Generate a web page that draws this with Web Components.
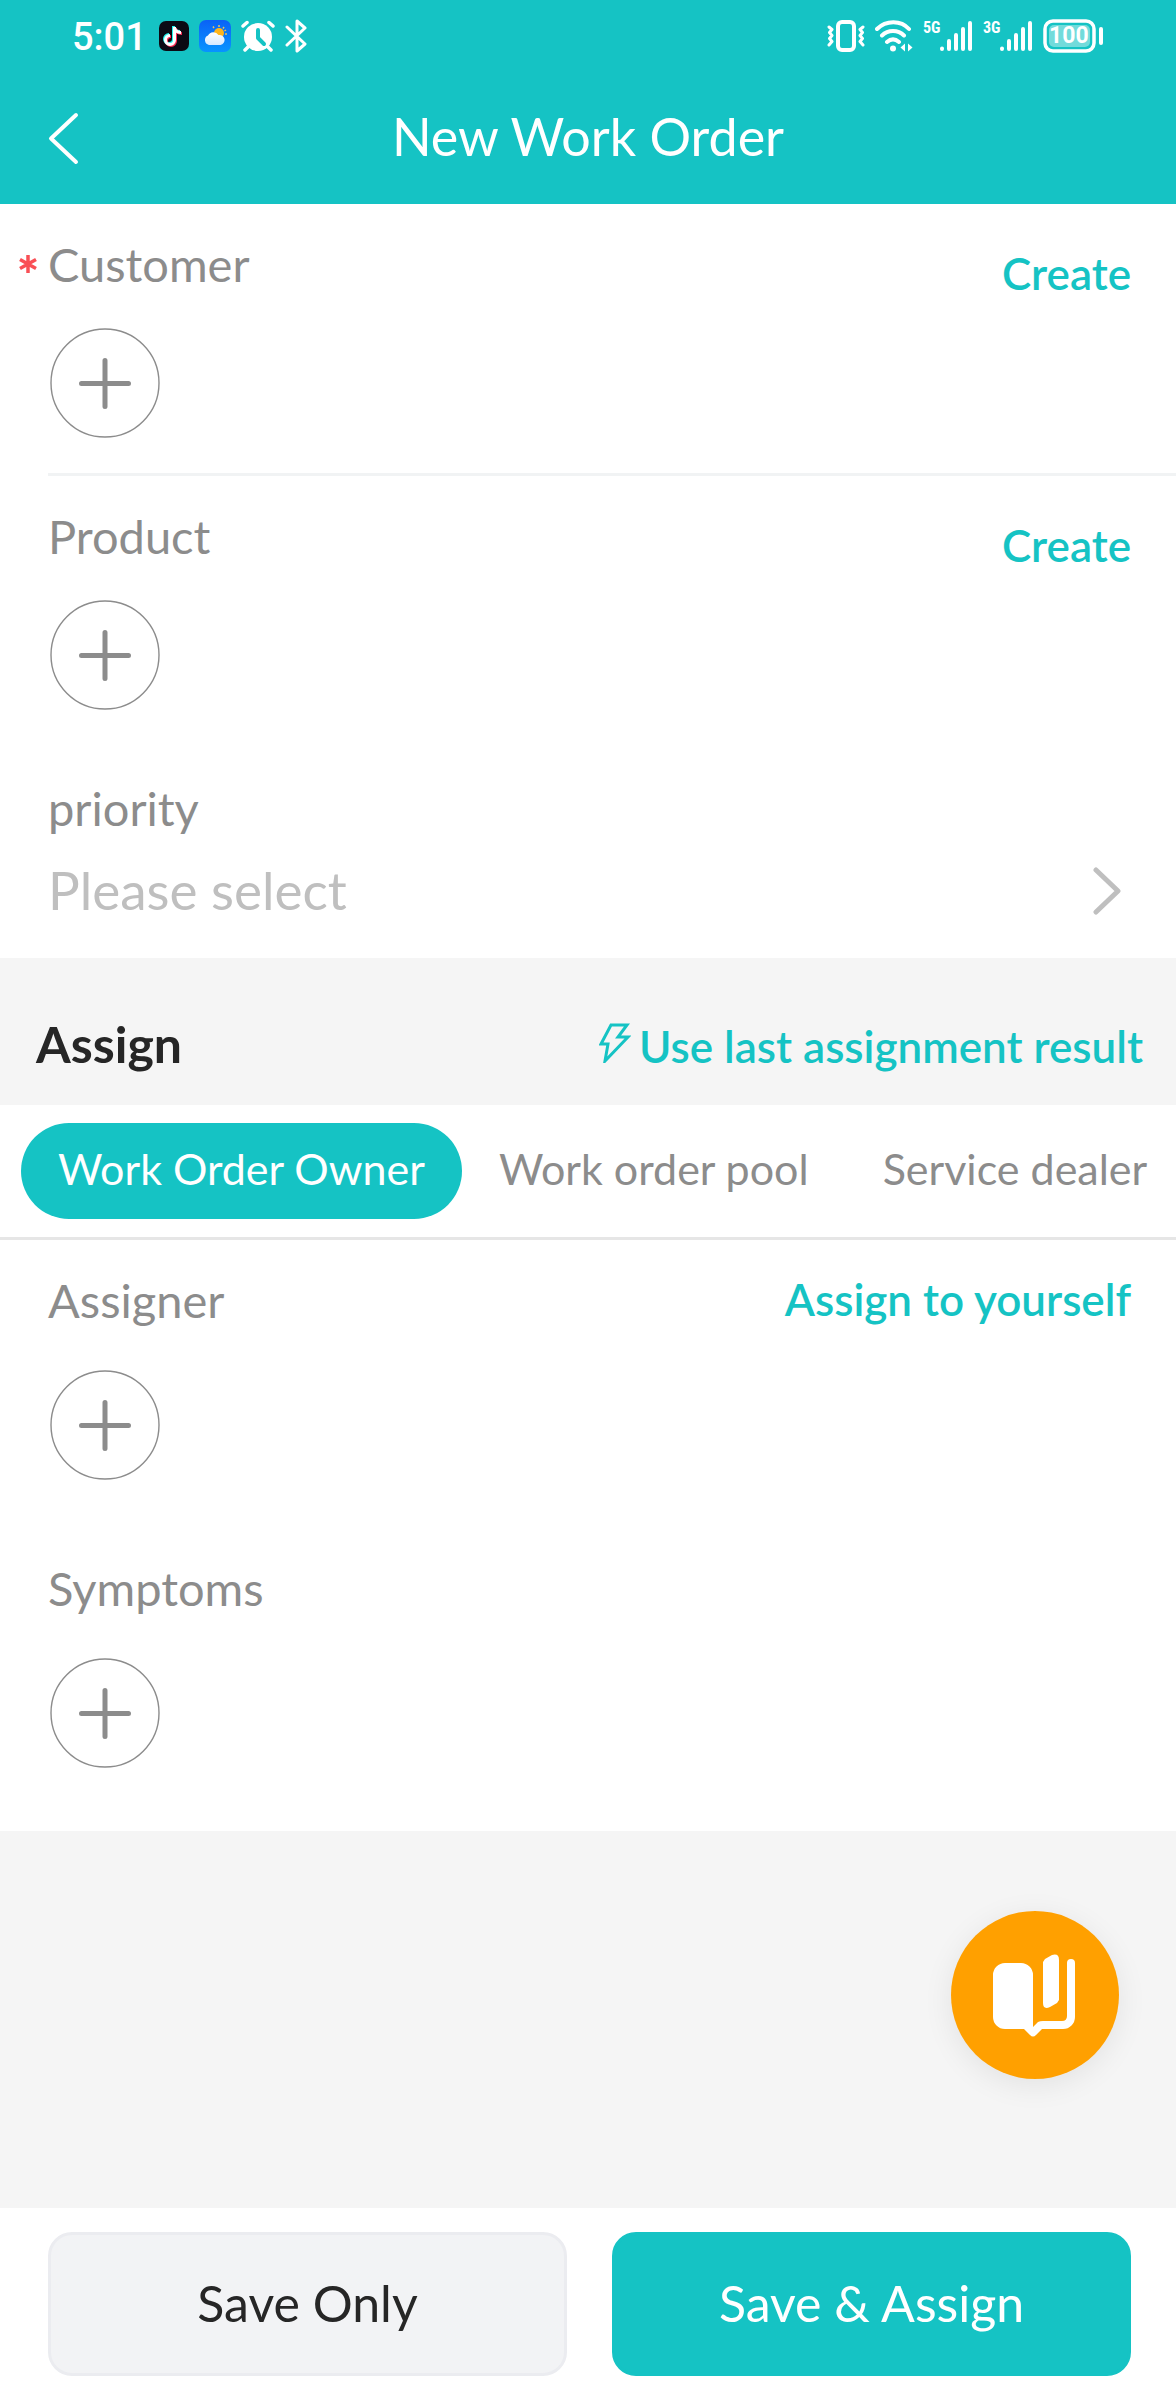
<!DOCTYPE html>
<html lang="en">
<head>
<meta charset="utf-8">
<meta name="viewport" content="width=device-width, initial-scale=1">
<title>New Work Order</title>
<style>
  :root {
    --teal: #15c3c4;
    --grey: #8c8c8c;
    --light: #bfbfbf;
    --ink: #262626;
    --page: #f5f5f5;
    --label-size: 47px;
    --tab-size: 43px;
    --link-size: 44px;
    --large-size: 50px;
  }
  body { margin: 0; font-family: Lato, "Open Sans", sans-serif; color: var(--ink); background: var(--page); }
</style>
</head>
<body>
<work-order-page></work-order-page>

<script>
const define = (name, html, setup) => customElements.define(name, class extends HTMLElement {
  constructor() {
    super();
    const tpl = document.createElement('template');
    tpl.innerHTML = html;
    this.attachShadow({ mode: 'open' }).append(tpl.content.cloneNode(true));
  }
  connectedCallback() { if (setup) setup(this, this.shadowRoot); }
});

define('signal-meter', `
<style>
  :host { display: flex; width: 50px; height: 32px; }
  span { width: 16px; font: 700 16px/16px "Liberation Sans Narrow", "Roboto Condensed", Roboto, sans-serif; }
  svg { display: block; flex: none; }
</style>
<span><slot></slot></span>
<svg width="34" height="32" viewBox="0 0 34 32" stroke="#fff" stroke-width="4" stroke-linecap="round" aria-hidden="true">
  <path d="M3 28.500v.5M10 21v8M17 15v14M24 9v20M31 3v26"/>
</svg>`);

define('status-bar', `
<style>
  :host { display: flex; align-items: center; justify-content: space-between; height: 60px; padding: 6px 72px 0; color: #fff; }
  .group { display: flex; align-items: center; gap: 10px; }
  time { font: 500 38px/48px Roboto, sans-serif; padding-top: 2px; margin-right: 2px; }
  svg { display: block; flex: none; }
  .battery { display: grid; align-items: center; }
  .battery > * { grid-area: 1 / 1; }
  .battery span { font: 700 23px/34px Roboto, sans-serif; padding-left: 6px; }
</style>
<div class="group">
  <time>5:01</time>
  <svg width="30" height="30" viewBox="0 0 30 30" fill="none" stroke-width="3" aria-hidden="true">
    <rect width="30" height="30" rx="7" fill="#0b0b14"/>
    <path d="M15.500 6v13a4.500 4.500 0 1 1-4.500-4.500M15.500 6.500c.5 3 3 5 6.500 5" stroke="#25f4ee" transform="translate(-1 -1)"/>
    <path d="M15.500 6v13a4.500 4.500 0 1 1-4.500-4.500M15.500 6.500c.5 3 3 5 6.500 5" stroke="#fe2c55" transform="translate(1 1)"/>
    <path d="M15.500 6v13a4.500 4.500 0 1 1-4.500-4.500M15.500 6.500c.5 3 3 5 6.500 5" stroke="#fff"/>
  </svg>
  <svg width="32" height="32" viewBox="0 0 32 32" aria-hidden="true">
    <defs>
      <linearGradient id="sky" x2="0" y2="1"><stop stop-color="#0a62f6"/><stop offset="1" stop-color="#0794ff"/></linearGradient>
      <linearGradient id="cloud" x2="0" y2="1"><stop stop-color="#fff"/><stop offset="1" stop-color="#d5e9ff"/></linearGradient>
    </defs>
    <rect width="32" height="32" rx="7" fill="url(#sky)"/>
    <circle cx="20" cy="13" r="5" fill="#ffb51b"/>
    <path d="M14 6.500l1 1.500M20 5v2M25 7l-1 1.500M27 10l-1.500 1M26 14h2" stroke="#e9c45c" stroke-width="1.500"/>
    <path d="M10 25a5 5 0 0 1-1-9.500 6 6 0 0 1 10.500-.5 5 5 0 1 1 2 10z" fill="url(#cloud)"/>
  </svg>
  <svg width="34" height="32" viewBox="0 0 34 32" aria-hidden="true">
    <circle cx="17" cy="17" r="14" fill="#fff"/>
    <path d="M2 6l4-3.500M32 6l-4-3.500M7 27l-3 3M27 27l3 3" stroke="#fff" stroke-width="3.500" stroke-linecap="round"/>
    <path d="M17 10v8l6 6" fill="none" stroke="#15c3c4" stroke-width="4" stroke-linecap="round" stroke-linejoin="round"/>
  </svg>
  <svg width="22" height="34" viewBox="0 0 22 34" fill="none" stroke="#fff" stroke-width="3" stroke-linejoin="round" stroke-linecap="round" aria-hidden="true">
    <path d="M2 8l18 17-8 7V2l8 7L2 26"/>
  </svg>
</div>
<div class="group">
  <svg width="38" height="32" viewBox="0 0 38 32" fill="none" stroke="#fff" stroke-linecap="round" stroke-linejoin="round" aria-hidden="true">
    <rect x="11" y="2" width="16" height="28" rx="4" stroke-width="4"/>
    <path d="M2 7l3 2.500-2.500 3L5 15.500l-2.500 3L5 21.500 2 25M36 7l-3 2.500 2.500 3-2.500 3 2.500 3-2.500 3L36 25" stroke-width="3"/>
  </svg>
  <svg width="38" height="32" viewBox="0 0 38 32" fill="none" stroke="#fff" stroke-width="4" stroke-linecap="round" aria-hidden="true">
    <path d="M2 9c9-9 24-9 32 0M7 15.500c6-6 16-6 22 0M12 22c4-3.500 8-3.500 12 0"/>
    <circle cx="18" cy="28.500" r="3" fill="#fff" stroke="none"/>
    <path d="M30 23.500v8l-4.500-4zM33 23.500v8l4.500-4z" fill="#fff" stroke="none"/>
  </svg>
  <signal-meter>5G</signal-meter>
  <signal-meter>3G</signal-meter>
  <div class="battery">
    <svg width="61" height="34" viewBox="0 0 61 34" fill="none" aria-hidden="true">
      <rect x="2" y="2" width="49" height="30" rx="8" stroke="#fff" stroke-width="3.500"/>
      <rect x="6" y="6" width="41" height="22" rx="5" fill="#fff" opacity=".4"/>
      <path d="M58 10v14" stroke="#fff" stroke-width="4" stroke-linecap="round"/>
    </svg>
    <span>100</span>
  </div>
</div>`);

define('nav-bar', `
<style>
  :host { display: grid; grid-template-columns: 90px 1fr 90px; align-items: center; height: 138px; padding: 0 36px; color: #fff; }
  button { display: flex; width: 60px; height: 76px; padding: 6px 12px 0; border: 0; background: none; align-items: center; cursor: pointer; }
  svg { display: block; flex: none; }
  h1 { margin: 0; padding-top: 2px; font-size: 52px; line-height: 64px; font-weight: 400; text-align: center; }
</style>
<button type="button" aria-label="Back">
  <svg width="31" height="53" viewBox="0 0 31 53" fill="none" stroke="#fff" stroke-width="4" stroke-linecap="round" stroke-linejoin="round"><path d="M28 3L3 26.500 28 50"/></svg>
</button>
<h1><slot></slot></h1>`);

define('add-field', `
<style>
  :host { display: block; padding: 31px 0 35px 48px; }
  :host([compact]) { padding-bottom: 48px; }
  .row { display: flex; justify-content: space-between; align-items: flex-start; height: 93px; padding-right: 45px; }
  :host([compact]) .row { height: 99px; }
  .name { display: flex; }
  label { font-size: var(--label-size); line-height: 58px; color: var(--grey); }
  .star { display: none; width: 30px; margin-left: -30px; }
  :host([required]) .star { display: block; }
  .star svg { display: block; margin: 19px 0 0 1px; }
  ::slotted(a) { font-size: var(--link-size); line-height: 76px; font-weight: 600; color: var(--teal); text-decoration: none; }
  :host([compact]) ::slotted(a) { line-height: 56px; }
  button { display: block; width: 110px; height: 110px; margin-left: 2px; padding: 0; border: 0; background: none; border-radius: 50%; cursor: pointer; }
  button svg { display: block; }
</style>
<div class="row">
  <div class="name">
    <span class="star"><svg width="18" height="20" viewBox="0 0 18 20" stroke="#f94f55" stroke-width="3.500" aria-label="required"><path d="M9 1v18M1 5.500l16 9M17 5.500l-16 9"/></svg></span>
    <label for="add"></label>
  </div>
  <slot></slot>
</div>
<button type="button" id="add">
  <svg width="110" height="110" viewBox="0 0 110 110" fill="none" stroke="#8c8c8c" aria-hidden="true">
    <circle cx="55" cy="55" r="54" stroke-width="1.400"/>
    <path d="M55 32.500v46M31.500 55.500h47" stroke-width="5" stroke-linecap="round"/>
  </svg>
</button>`, (host, root) => { root.querySelector('label').textContent = host.getAttribute('label'); });

define('select-field', `
<style>
  :host { display: flex; flex-direction: column; gap: 22px; padding: 34px 48px 37px; }
  label { font-size: var(--label-size); line-height: 58px; color: var(--grey); }
  .row { display: grid; align-items: center; }
  .row > * { grid-area: 1 / 1; }
  select { appearance: none; width: 100%; height: 62px; margin: 0; padding: 0; border: 0; background: none; font: inherit; font-size: 53px; line-height: 62px; color: var(--light); }
  svg { display: block; justify-self: end; margin-right: 6px; pointer-events: none; }
</style>
<label for="choice"></label>
<div class="row">
  <select id="choice"><option>Please select</option></select>
  <svg width="30" height="50" viewBox="0 0 30 50" fill="none" stroke="#bfbfbf" stroke-width="5" stroke-linecap="round" stroke-linejoin="round" aria-hidden="true"><path d="M4 5l22 21L4 47"/></svg>
</div>`, (host, root) => { root.querySelector('label').textContent = host.getAttribute('label'); });

define('assign-heading', `
<style>
  :host { display: flex; justify-content: space-between; align-items: baseline; padding: 56px 33px 31px 36px; background: var(--page); }
  h2 { margin: 0; font-size: var(--large-size); line-height: 60px; font-weight: 700; }
  a { display: flex; gap: 8px; font-size: var(--link-size); line-height: 50px; font-weight: 600; color: var(--teal); text-decoration: none; }
  svg { display: block; flex: none; }
</style>
<h2><slot></slot></h2>
<a href="#last"><svg width="32" height="42" viewBox="0 0 32 42" fill="none" stroke="#15c3c4" stroke-width="3" aria-hidden="true"><path d="M12 4h16l-9 12h10L6 40l3-17H2z"/></svg><slot name="action"></slot></a>`);

define('tab-strip', `
<style>
  :host { display: flex; overflow: hidden; padding: 18px 0 18px 21px; border-bottom: 3px solid #e6e6e6; background: #fff; }
  ::slotted(button) { flex: none; height: 96px; padding: 0 37px 6px; border: 0; border-radius: 48px; background: none; font: inherit; font-size: var(--tab-size); color: var(--grey); cursor: pointer; }
  ::slotted(button[aria-selected="true"]) { background: var(--teal); color: #fff; }
</style>
<slot></slot>`);

define('help-button', `
<style>
  :host { position: fixed; right: 57px; bottom: 321px; }
  button { display: block; width: 168px; height: 168px; padding: 0; border: 0; border-radius: 50%; background: #ffa000; box-shadow: 0 6px 30px rgba(0, 0, 0, .08); cursor: pointer; }
  svg { display: block; }
</style>
<button type="button" aria-label="Guide">
  <svg width="168" height="168" viewBox="0 0 168 168" fill="#fff">
    <path d="M54 52h16a12 12 0 0 1 12 12v52l5-5q2-1 5-1h19q5 0 5-5V52a4 4 0 0 1 8 0v54a12 12 0 0 1-12 12H91l-6 6q-3 3-6 0l-6-6H54a12 12 0 0 1-12-12V64a12 12 0 0 1 12-12z"/>
    <path d="M94 48l7-4q7-2 7 5v40l-2 3-7 4q-7 3-7-4V51z"/>
  </svg>
</button>`);

define('action-bar', `
<style>
  :host { display: flex; gap: 45px; padding: 24px 45px 24px 48px; background: #fff; }
  button { box-sizing: border-box; flex: 1; height: 144px; padding: 0 0 2px; border-radius: 24px; border: 3px solid var(--teal); background: var(--teal); color: #fff; font: inherit; font-size: var(--large-size); cursor: pointer; }
  .plain { border-color: #ebecf0; background: #f2f3f5; color: var(--ink); }
</style>
<button type="button" class="plain">Save Only</button>
<button type="submit">Save &amp; Assign</button>`);

define('work-order-page', `
<style>
  :host { display: flex; flex-direction: column; min-height: 100vh; background: var(--page); }
  header { background: var(--teal); }
  .card { background: #fff; }
  hr { height: 3px; margin: 0 0 0 48px; border: 0; background: #f1f3f4; }
  .people { padding-bottom: 15px; }
  action-bar { margin-top: auto; }
</style>
<header>
  <status-bar></status-bar>
  <nav-bar>New Work Order</nav-bar>
</header>
<main>
  <div class="card">
    <add-field label="Customer" required><a href="#customer">Create</a></add-field>
    <hr>
    <add-field label="Product"><a href="#product">Create</a></add-field>
    <select-field label="priority"></select-field>
  </div>
  <assign-heading>Assign<span slot="action">Use last assignment result</span></assign-heading>
  <tab-strip role="tablist">
    <button type="button" role="tab" aria-selected="true">Work Order Owner</button>
    <button type="button" role="tab" aria-selected="false">Work order pool</button>
    <button type="button" role="tab" aria-selected="false">Service dealer</button>
  </tab-strip>
  <div class="card people">
    <add-field label="Assigner" compact><a href="#self">Assign to yourself</a></add-field>
    <add-field label="Symptoms" compact></add-field>
  </div>
</main>
<help-button></help-button>
<action-bar></action-bar>`);
</script>
</body>
</html>
